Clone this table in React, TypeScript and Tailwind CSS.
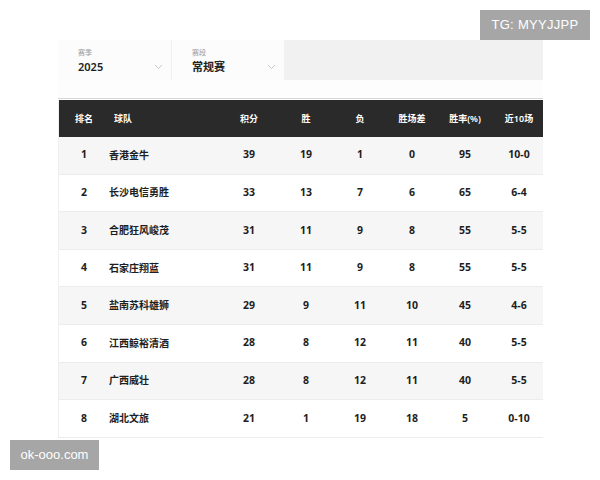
import React from "react";

const rows = [
  ["1", "香港金牛", "39", "19", "1", "0", "95", "10-0"],
  ["2", "长沙电信勇胜", "33", "13", "7", "6", "65", "6-4"],
  ["3", "合肥狂风峻茂", "31", "11", "9", "8", "55", "5-5"],
  ["4", "石家庄翔蓝", "31", "11", "9", "8", "55", "5-5"],
  ["5", "盐南苏科雄狮", "29", "9", "11", "10", "45", "4-6"],
  ["6", "江西鲸裕清酒", "28", "8", "12", "11", "40", "5-5"],
  ["7", "广西威壮", "28", "8", "12", "11", "40", "5-5"],
  ["8", "湖北文旅", "21", "1", "19", "18", "5", "0-10"],
];

const font = { fontFamily: '"Noto Sans", "Noto Sans CJK SC", sans-serif' };

function Chevron() {
  return (
    <svg width="9" height="6" viewBox="0 0 9 6" className="text-[#c8c8c8]">
      <path d="M1 1l3.5 3.5L8 1" fill="none" stroke="currentColor" strokeWidth="1" />
    </svg>
  );
}

export default function App() {
  return (
    <div className="relative w-[600px] h-[480px] bg-white overflow-hidden" style={font}>
      <div className="ml-[58px] pt-[40px] w-[485px]">
        <div className="flex h-[40px]">
          <div className="w-[114px] bg-[#fcfcfc] border-r border-[#efefef] pl-[20px] pr-[8px] pt-[3px] flex flex-col justify-center">
            <div className="text-[7px] leading-[10px] text-[#9a9a9a]">赛季</div>
            <div className="flex items-center justify-between mt-[1px]">
              <span className="text-[11px] leading-[16px] font-semibold text-[#222]">2025</span>
              <Chevron />
            </div>
          </div>
          <div className="w-[112px] bg-[#fcfcfc] pl-[20px] pr-[8px] pt-[3px] flex flex-col justify-center">
            <div className="text-[7px] leading-[10px] text-[#9a9a9a]">赛段</div>
            <div className="flex items-center justify-between mt-[1px]">
              <span className="text-[11px] leading-[16px] font-semibold text-[#222]">常规赛</span>
              <Chevron />
            </div>
          </div>
          <div className="flex-1 bg-[#f1f1f1]" />
        </div>
        <div className="h-[19px] bg-[#fdfdfd] border-b border-[#d6d6d6]" />
        <div className="mt-[1px] border-l border-[#efefef] overflow-hidden">
          <div className="flex h-[37px] items-center bg-[#2a2a2a] text-white text-[9px] font-semibold">
            <div className="w-[50px] shrink-0 text-center">排名</div>
            <div className="w-[111px] shrink-0 pl-[5px]">球队</div>
            <div className="w-[58px] shrink-0 text-center">积分</div>
            <div className="w-[56px] shrink-0 text-center">胜</div>
            <div className="w-[52px] shrink-0 text-center">负</div>
            <div className="w-[52px] shrink-0 text-center">胜场差</div>
            <div className="w-[54px] shrink-0 text-center">胜率(%)</div>
            <div className="w-[54px] shrink-0 text-center">近10场</div>
          </div>
          {rows.map((r, i) => (
            <div
              key={i}
              className={`flex h-[37.6px] items-center text-[10.5px] font-bold text-[#1e1e1e] border-b border-[#ececec] ${i % 2 === 0 ? "bg-[#f6f6f6]" : "bg-white"}`}
            >
              <div className="w-[50px] shrink-0 text-center">{r[0]}</div>
              <div className="w-[111px] shrink-0 text-[10px]">{r[1]}</div>
              <div className="w-[58px] shrink-0 text-center">{r[2]}</div>
              <div className="w-[56px] shrink-0 text-center">{r[3]}</div>
              <div className="w-[52px] shrink-0 text-center">{r[4]}</div>
              <div className="w-[52px] shrink-0 text-center">{r[5]}</div>
              <div className="w-[54px] shrink-0 text-center">{r[6]}</div>
              <div className="w-[54px] shrink-0 text-center">{r[7]}</div>
            </div>
          ))}
        </div>
      </div>
      <div
        className="absolute left-[480px] top-[10px] w-[110px] h-[30px] bg-[#a6a6a6] text-white text-[13px] flex items-center justify-center tracking-[0.3px]"
        style={{ fontFamily: '"Liberation Sans", sans-serif' }}
      >
        TG: MYYJJPP
      </div>
      <div
        className="absolute left-[10px] top-[440px] w-[89px] h-[30px] bg-[#a6a6a6] text-white text-[13px] flex items-center justify-center"
        style={{ fontFamily: '"Liberation Sans", sans-serif' }}
      >
        ok-ooo.com
      </div>
    </div>
  );
}
